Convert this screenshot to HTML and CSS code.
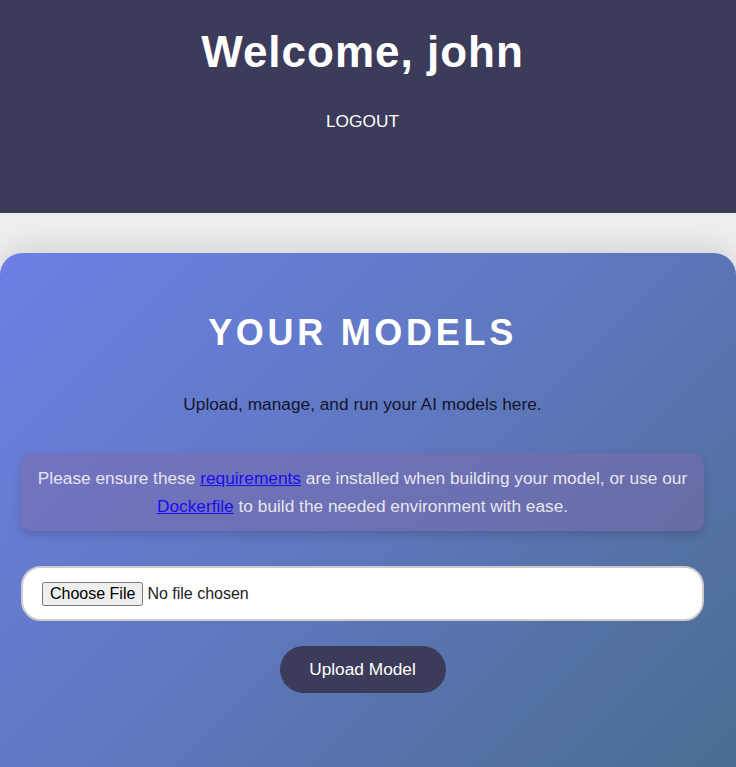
FILE: index.html
```html
<!DOCTYPE html>
<html lang="en">
<head>
  <meta charset="UTF-8">
  <title>Your Models</title>
  <link rel="stylesheet" href="styles.css">
</head>
<body>

  <header class="top-bar">
    <h1>Welcome, john</h1>
    <a class="logout-link" href="#">LOGOUT</a>
  </header>

  <main class="models-card">
    <h2>YOUR MODELS</h2>
    <p class="subtitle">Upload, manage, and run your AI models here.</p>

    <div class="notice">
      Please ensure these <a href="#">requirements</a> are installed when building your model, or use our
      <a href="#">Dockerfile</a> to build the needed environment with ease.
    </div>

    <form class="upload-form">
      <div class="file-box">
        <input type="file" name="model">
      </div>
      <button type="submit" class="upload-btn">Upload Model</button>
    </form>
  </main>

</body>
</html>
```

FILE: styles.css
```css
html, body {
  height: 100%;
}
body {
  margin: 0;
  font-family: "Liberation Sans", Arial, sans-serif;
  background: #efeff2;
  overflow: hidden;
}
.top-bar {
  background: #3d3b5a;
  height: 213px;
  box-sizing: border-box;
  padding: 27px 11px 0 0;
  text-align: center;
}
.top-bar h1 {
  margin: 0;
  color: #fff;
  font-size: 44px;
  line-height: 50px;
  letter-spacing: 1px;
}
.logout-link {
  display: inline-block;
  margin-top: 33px;
  color: #fff;
  text-decoration: none;
  font-size: 17.3px;
  line-height: 22px;
}
.models-card {
  margin-top: 40px;
  height: 540px;
  border-radius: 22px;
  background: linear-gradient(135deg, #6d7fe4 0%, #5d77bb 50%, #486b8a 100%);
  box-shadow: 0 -6px 30px rgba(0, 0, 0, 0.12);
  padding: 59px 32px 0 21px;
  text-align: center;
}
.models-card h2 {
  margin: 0;
  color: #fff;
  font-size: 36px;
  line-height: 42px;
  letter-spacing: 3.7px;
}
.subtitle {
  margin: 39px 0 0;
  color: #15152a;
  font-size: 17.3px;
  line-height: 22px;
}
.notice {
  margin-top: 38px;
  padding: 11px 12px;
  border-radius: 10px;
  background: rgba(128, 104, 168, 0.45);
  box-shadow: 0 4px 10px rgba(0, 0, 0, 0.15);
  color: #e6e6ef;
  font-size: 17.3px;
  line-height: 28px;
}
.notice a {
  color: #1a0dee;
}
.upload-form {
  margin-top: 35px;
}
.file-box {
  background: #fff;
  border: 2px solid #ccc;
  border-radius: 20px;
  height: 51px;
  padding: 0 19px;
  display: flex;
  align-items: center;
}
.file-box input {
  font-family: "Liberation Sans", Arial, sans-serif;
  font-size: 16px;
  color: #222;
}
.upload-btn {
  margin-top: 25px;
  width: 166px;
  height: 47px;
  border: none;
  border-radius: 24px;
  background: #3d3b5a;
  color: #fff;
  font-family: "Liberation Sans", Arial, sans-serif;
  font-size: 17.3px;
  cursor: pointer;
}
```
